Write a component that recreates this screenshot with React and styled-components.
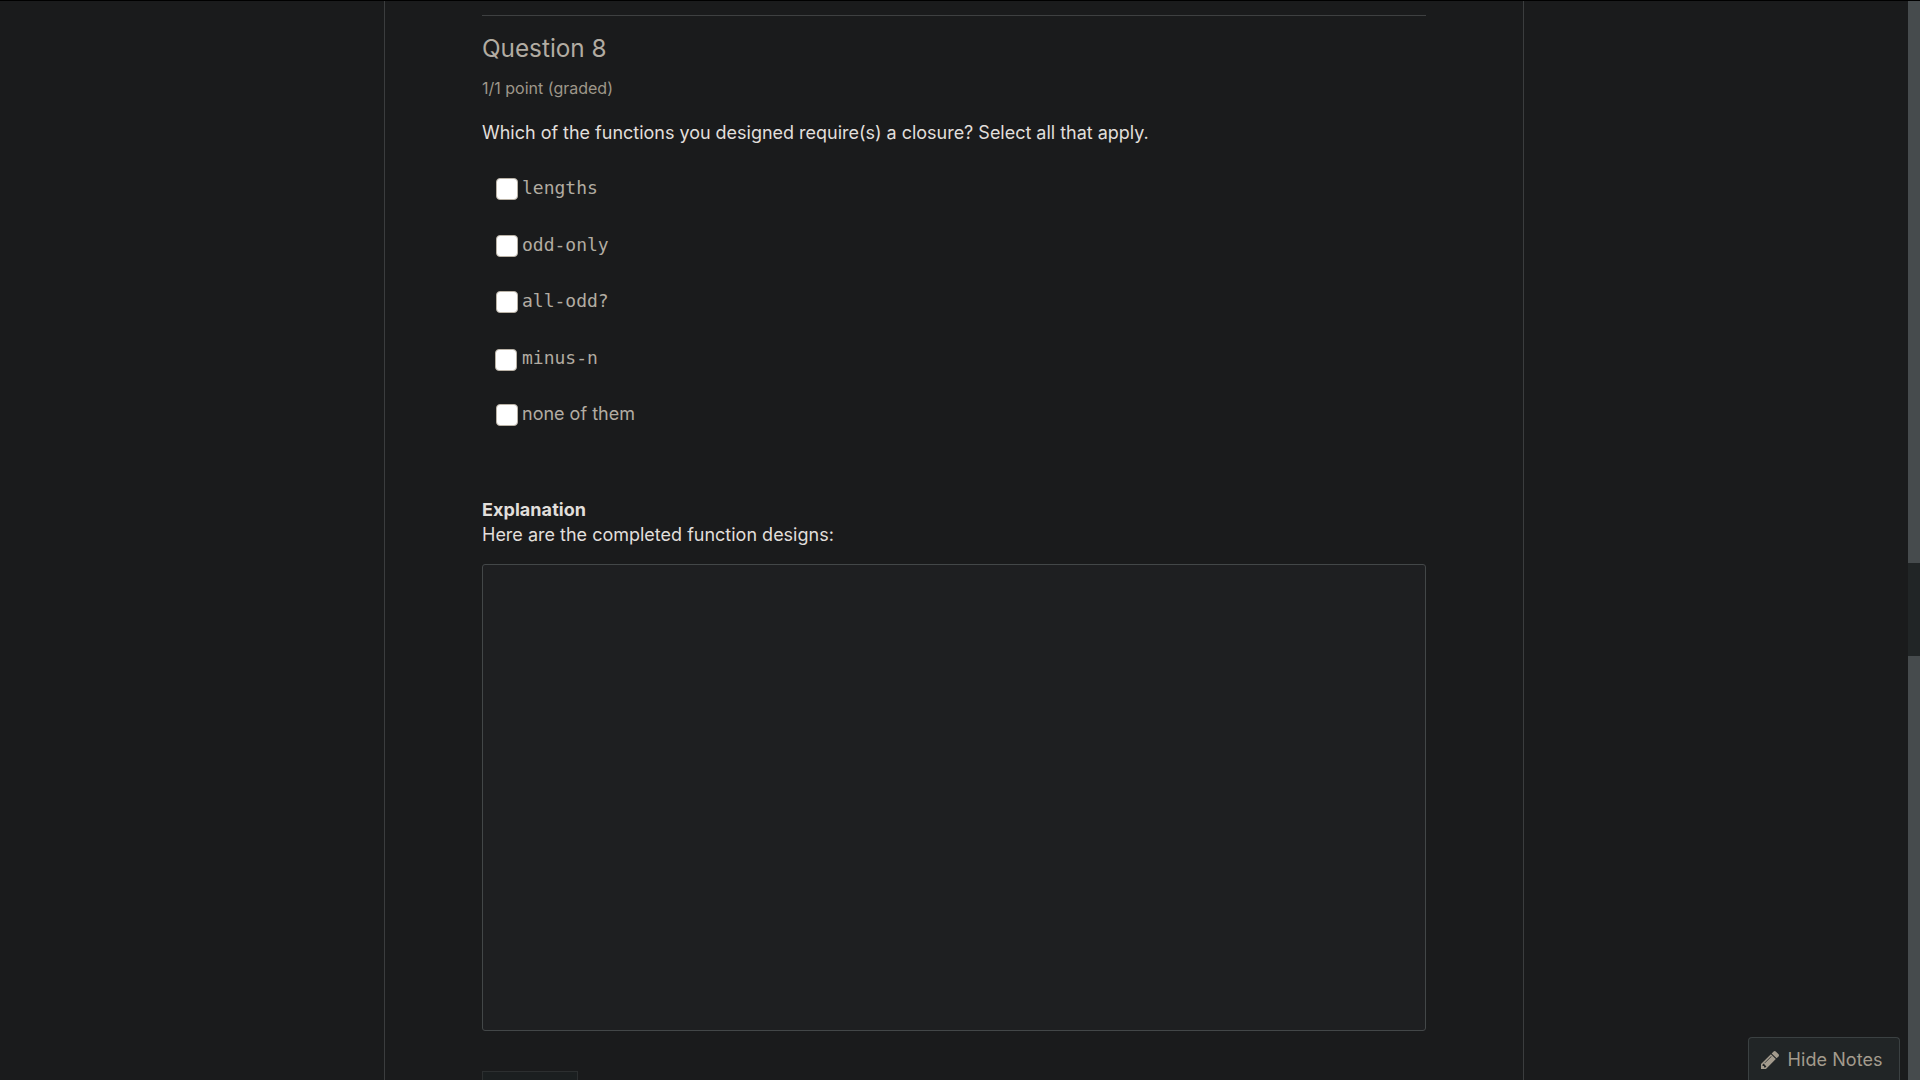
import React from "react";
import styled, { createGlobalStyle } from "styled-components";

const GlobalStyle = createGlobalStyle`
  * { box-sizing: border-box; }
  html, body { margin: 0; padding: 0; background: #1a1b1c; }
  body { overflow: hidden; font-family: Inter, "Liberation Sans", sans-serif; }
`;

const Page = styled.div`
  width: 1920px;
  height: 1080px;
  display: flex;
  overflow: hidden;
  border-top: 1px solid #000;
  background: #1a1b1c;
`;

const Margin = styled.div`
  width: 384px;
  flex: none;
`;

const Column = styled.main`
  width: 1140px;
  flex: none;
  border: solid #3b3d3e;
  border-width: 0 1px;
  padding: 14px 97px 0;
  overflow: hidden;
`;

const Problem = styled.section`
  display: flex;
  flex-direction: column;
  align-items: stretch;
  border-top: 1px solid #3e4041;
`;

const Title = styled.h3`
  margin: 16px 0 0;
  font-size: 24.3px;
  line-height: 32px;
  font-weight: 380;
  color: #b2aca2;
`;

const Progress = styled.div`
  margin-top: 14px;
  font-size: 16px;
  line-height: 20px;
  color: #9e978a;
`;

const Prompt = styled.p`
  margin: 21px 0 0;
  font-size: 18px;
  line-height: 28px;
  letter-spacing: -0.017px;
  color: #e1dfdb;
`;

const Choices = styled.div`
  display: flex;
  flex-direction: column;
  margin-top: 31px;
  padding-left: 14px;
  height: 319px;
`;

const Choice = styled.label`
  display: flex;
  height: ${(p) => p.$height}px;
  flex: none;
  margin-left: ${(p) => p.$shift || 0}px;
  gap: ${(p) => 4 - (p.$shift || 0)}px;
`;

const Box = styled.input`
  appearance: none;
  width: 22px;
  height: 22px;
  flex: none;
  margin: 0;
  background: #fff;
  border: 1px solid #b9b2a6;
  border-radius: 4px;
`;

const ChoiceText = styled.span`
  margin-top: ${(p) => p.$lift}px;
  height: 22px;
  font-family: ${(p) =>
    p.$code ? '"DejaVu Sans Mono", monospace' : 'Inter, sans-serif'};
  font-size: 18px;
  line-height: 22px;
  color: #b2aca2;
`;

const Explanation = styled.div`
  font-size: 18px;
  line-height: 25px;
  color: #e1dfdb;
`;

const Heading = styled.div`
  font-weight: 700;
  letter-spacing: 0.06px;
`;

const CodePanel = styled.div`
  height: 467px;
  margin-top: 17px;
  background: #1e1f21;
  border: 1px solid #434748;
  border-radius: 3px;
`;

const Submit = styled.div`
  width: 96px;
  height: 40px;
  margin-top: 40px;
  background: #1b1f20;
  border: 1px solid #2c2f30;
`;

const Side = styled.aside`
  flex: 1;
  display: flex;
  align-items: flex-end;
  justify-content: flex-end;
  padding-right: 8px;
`;

const NotesButton = styled.button`
  display: flex;
  align-items: center;
  gap: 8.5px;
  width: 152px;
  height: 43px;
  margin: 0;
  padding: 2px 0 0 12px;
  background: #212526;
  border: 1px solid #3b4142;
  border-bottom: 0;
  border-radius: 4px 4px 0 0;
  font-family: inherit;
  font-size: 18px;
  line-height: 22px;
  letter-spacing: 0.08px;
  color: #a39b8d;
  white-space: nowrap;
`;

const Track = styled.div`
  width: 12px;
  flex: none;
  padding-top: 562px;
  background: #464b4d;
`;

const Thumb = styled.div`
  height: 93px;
  background: #212526;
`;

const Pencil = () => (
  <svg width="18" height="18" viewBox="128 149 1515 1515" fill="currentColor">
    <path d="M491 1536l91-91-235-235-91 91v107h128v128h107zm523-928q0-22-22-22-10 0-17 7l-542 542q-7 7-7 17 0 22 22 22 10 0 17-7l542-542q7-7 7-17zm-54-192l416 416-832 832h-416v-416zm683 96q0 53-37 90l-166 166-416-416 166-165q36-38 90-38 53 0 91 38l235 234q37 39 37 91z" />
  </svg>
);

const choices = [
  { text: "lengths", code: true, height: 57, lift: -1 },
  { text: "odd-only", code: true, height: 56, lift: -1 },
  { text: "all-odd?", code: true, height: 58, lift: -1 },
  { text: "minus-n", code: true, height: 55, lift: -2, shift: -1 },
  { text: "none of them", code: false, height: 22, lift: -1 },
];

export default function App() {
  return (
    <>
      <GlobalStyle />
      <Page>
        <Margin />
        <Column>
          <Problem>
            <Title>Question 8</Title>
            <Progress>1/1 point (graded)</Progress>
            <Prompt>
              Which of the functions you designed require(s) a closure? Select
              all that apply.
            </Prompt>
            <Choices>
              {choices.map((c) => (
                <Choice key={c.text} $height={c.height} $shift={c.shift}>
                  <Box type="checkbox" />
                  <ChoiceText $code={c.code} $lift={c.lift}>
                    {c.text}
                  </ChoiceText>
                </Choice>
              ))}
            </Choices>
            <Explanation>
              <Heading>Explanation</Heading>
              <div>Here are the completed function designs:</div>
            </Explanation>
            <CodePanel />
            <Submit />
          </Problem>
        </Column>
        <Side>
          <NotesButton>
            <Pencil />
            Hide Notes
          </NotesButton>
        </Side>
        <Track>
          <Thumb />
        </Track>
      </Page>
    </>
  );
}
